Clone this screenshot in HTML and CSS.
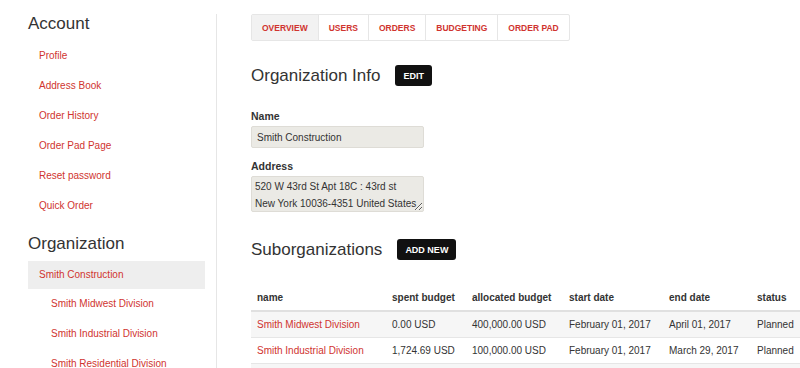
FILE: index.html
```html
<!DOCTYPE html>
<html lang="en">
<head>
    <meta charset="UTF-8">
    <meta name="viewport" content="width=device-width, initial-scale=1.0">
    <title>Organization - Account</title>
    <link rel="stylesheet" href="styles.css">
</head>
<body>
    <!-- Sidebar -->
    <div class="sidebar">
        <h2 class="side-title">Account</h2>
        <ul class="side-nav">
            <li><a href="#">Profile</a></li>
            <li><a href="#">Address Book</a></li>
            <li><a href="#">Order History</a></li>
            <li><a href="#">Order Pad Page</a></li>
            <li><a href="#">Reset password</a></li>
            <li><a href="#">Quick Order</a></li>
        </ul>
        <h2 class="side-title org-title">Organization</h2>
        <ul class="side-nav">
            <li class="active"><a href="#">Smith Construction</a></li>
            <li class="sub"><a href="#">Smith Midwest Division</a></li>
            <li class="sub"><a href="#">Smith Industrial Division</a></li>
            <li class="sub"><a href="#">Smith Residential Division</a></li>
        </ul>
    </div>

    <!-- Main Content -->
    <div class="main-content">
        <div class="tabs">
            <a href="#" class="tab active">Overview</a>
            <a href="#" class="tab">Users</a>
            <a href="#" class="tab">Orders</a>
            <a href="#" class="tab">Budgeting</a>
            <a href="#" class="tab">Order Pad</a>
        </div>

        <div class="section-head">
            <h1>Organization Info</h1>
            <button class="btn">Edit</button>
        </div>

        <label class="field-label" for="org-name">Name</label>
        <input id="org-name" class="field" type="text" value="Smith Construction" readonly>

        <label class="field-label" for="org-address">Address</label>
        <textarea id="org-address" class="field field-area" readonly>520 W 43rd St Apt 18C : 43rd st
New York 10036-4351 United States</textarea>

        <div class="section-head sub-head">
            <h1>Suborganizations</h1>
            <button class="btn">Add New</button>
        </div>

        <table class="sub-table">
            <thead>
                <tr>
                    <th class="c-name">name</th>
                    <th class="c-spent">spent budget</th>
                    <th class="c-alloc">allocated budget</th>
                    <th class="c-start">start date</th>
                    <th class="c-end">end date</th>
                    <th>status</th>
                </tr>
            </thead>
            <tbody>
                <tr>
                    <td><a href="#">Smith Midwest Division</a></td>
                    <td>0.00 USD</td>
                    <td>400,000.00 USD</td>
                    <td>February 01, 2017</td>
                    <td>April 01, 2017</td>
                    <td>Planned</td>
                </tr>
                <tr>
                    <td><a href="#">Smith Industrial Division</a></td>
                    <td>1,724.69 USD</td>
                    <td>100,000.00 USD</td>
                    <td>February 01, 2017</td>
                    <td>March 29, 2017</td>
                    <td>Planned</td>
                </tr>
                <tr>
                    <td><a href="#">Smith Residential Division</a></td>
                    <td>0.00 USD</td>
                    <td>250,000.00 USD</td>
                    <td>February 01, 2017</td>
                    <td>May 01, 2017</td>
                    <td>Planned</td>
                </tr>
            </tbody>
        </table>
    </div>
</body>
</html>
```

FILE: styles.css
```css
/* Basic Reset */
body, h1, h2, ul {
    margin: 0;
    padding: 0;
}

body {
    display: flex;
    align-items: flex-start;
    padding-left: 28px;
    background-color: #fff;
    color: #333;
    font-family: 'Liberation Sans', Arial, sans-serif;
    font-size: 10px;
    overflow: hidden;
}

a {
    color: #d0342f;
    text-decoration: none;
}

/* Sidebar */
.sidebar {
    width: 177px;
    flex-shrink: 0;
    padding-top: 12px;
}

.side-title {
    font-size: 17px;
    font-weight: normal;
    line-height: 24px;
    color: #333;
}

.org-title {
    margin-top: 11px;
    margin-bottom: 4px;
}

.side-nav {
    list-style: none;
    margin-top: 5px;
}

.side-nav li a {
    display: block;
    height: 30px;
    line-height: 30px;
    padding-left: 11px;
}

.side-nav li.active a {
    height: 28px;
    line-height: 28px;
    background-color: #eee;
}

.side-nav li.sub a {
    padding-left: 23px;
}

/* Main */
.main-content {
    margin-left: 11px;
    margin-top: 14px;
    min-height: 400px;
    border-left: 1px solid #e6e6e6;
    padding-left: 34px;
    flex-grow: 1;
    min-width: 0;
}

.tabs {
    display: inline-flex;
    height: 27px;
    border: 1px solid #e6e6e6;
    border-radius: 2px;
    box-sizing: border-box;
}

.tab {
    display: flex;
    align-items: center;
    padding: 0 10px;
    font-size: 8.5px;
    font-weight: bold;
    text-transform: uppercase;
    color: #d0342f;
    border-left: 1px solid #e6e6e6;
}

.tab:first-child {
    border-left: none;
}

.tab.active {
    background-color: #f2f2f2;
}

.section-head {
    display: flex;
    align-items: center;
    height: 21px;
    margin-top: 24px;
    margin-bottom: 24px;
}

.section-head h1 {
    font-size: 17px;
    font-weight: normal;
    color: #333;
}

.btn {
    margin-left: 15px;
    height: 21px;
    padding: 0 8px;
    border: none;
    border-radius: 3px;
    background-color: #111;
    color: #fff;
    font-family: 'Liberation Sans', Arial, sans-serif;
    font-size: 9px;
    font-weight: bold;
    text-transform: uppercase;
}

.field-label {
    display: block;
    font-size: 10.5px;
    font-weight: bold;
    line-height: 12px;
    margin-bottom: 4px;
}

.field {
    display: block;
    width: 173px;
    height: 22px;
    box-sizing: border-box;
    margin: 0 0 12px;
    padding: 0 5px;
    border: 1px solid #dedcd6;
    border-radius: 2px;
    background-color: #ebeae5;
    color: #333;
    font-family: 'Liberation Sans', Arial, sans-serif;
    font-size: 10px;
}

.field-area {
    height: 36px;
    padding: 1px 3px;
    line-height: 17px;
    resize: vertical;
    overflow: hidden;
}

.sub-head {
    margin-top: 27px;
    margin-bottom: 24px;
}

/* Table */
.sub-table {
    border-collapse: collapse;
    width: 600px;
    table-layout: fixed;
}

.sub-table th,
.sub-table td {
    text-align: left;
    padding: 0 6px;
    height: 25px;
    white-space: nowrap;
    border-top: 1px solid #e6e6e6;
}

.sub-table th {
    height: 26px;
    border-top: none;
    border-bottom: 2px solid #e0e0e0;
}

.sub-table tbody tr:nth-child(odd) {
    background-color: #f6f6f6;
}

.c-name { width: 123px; }
.c-spent { width: 68px; }
.c-alloc { width: 85px; }
.c-start { width: 88px; }
.c-end { width: 76px; }
```
